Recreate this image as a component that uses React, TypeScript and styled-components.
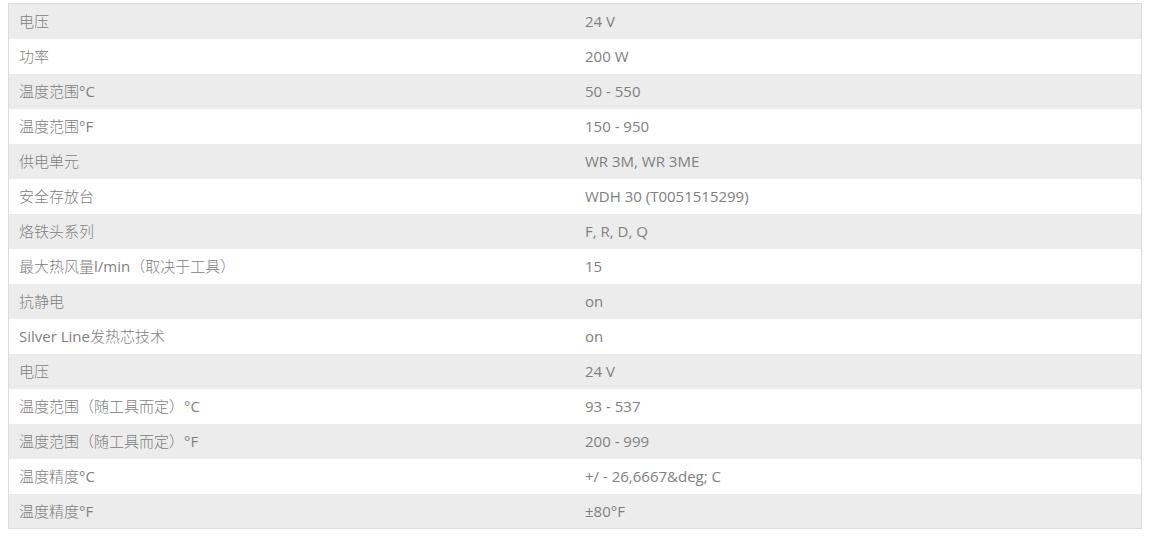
import React from "react";
import styled, { createGlobalStyle } from "styled-components";

const GlobalStyle = createGlobalStyle`
  body {
    margin: 0;
    padding: 3px 9px 0 8px;
    background: #ffffff;
    font-family: "Open Sans", "Noto Sans CJK SC", sans-serif;
  }
`;

const SpecTable = styled.table`
  width: 100%;
  border-collapse: collapse;
  border: 1px solid #dcdcdc;
  table-layout: fixed;
`;

const Row = styled.tr<{ $shaded: boolean }>`
  height: 35px;
  background: ${(p) => (p.$shaded ? "#ececec" : "#ffffff")};
`;

const Cell = styled.td`
  width: 50%;
  padding: 0 10px;
  font-size: 15px;
  line-height: 20px;
  color: #808080;
  vertical-align: middle;
  white-space: nowrap;
`;

const Han = styled.span`
  font-family: "Noto Sans CJK SC", sans-serif;
  font-size: 15px;
  font-weight: 300;
`;

const specs: [string, string][] = [
  ["电压", "24 V"],
  ["功率", "200 W"],
  ["温度范围°C", "50 - 550"],
  ["温度范围°F", "150 - 950"],
  ["供电单元", "WR 3M, WR 3ME"],
  ["安全存放台", "WDH 30 (T0051515299)"],
  ["烙铁头系列", "F, R, D, Q"],
  ["最大热风量l/min（取决于工具）", "15"],
  ["抗静电", "on"],
  ["Silver Line发热芯技术", "on"],
  ["电压", "24 V"],
  ["温度范围（随工具而定）°C", "93 - 537"],
  ["温度范围（随工具而定）°F", "200 - 999"],
  ["温度精度°C", "+/ - 26,6667&deg; C"],
  ["温度精度°F", "±80°F"],
];

// split a label into runs of Chinese and latin text
const HAN = /([\u3000-\u303f\u4e00-\u9fff\uff00-\uffef]+)/;

const Label = ({ text }: { text: string }) => {
  const parts = text.split(HAN).filter(Boolean);
  return (
    <>
      {parts.map((part, i) =>
        HAN.test(part) ? (
          <Han key={i}>{part}</Han>
        ) : (
          <React.Fragment key={i}>{part}</React.Fragment>
        )
      )}
    </>
  );
};

const App = () => {
  return (
    <>
      <GlobalStyle />
      <SpecTable>
        <tbody>
          {specs.map(([label, value], i) => (
            <Row key={i} $shaded={i % 2 === 0}>
              <Cell>
                <Label text={label} />
              </Cell>
              <Cell>{value}</Cell>
            </Row>
          ))}
        </tbody>
      </SpecTable>
    </>
  );
};

export default App;
